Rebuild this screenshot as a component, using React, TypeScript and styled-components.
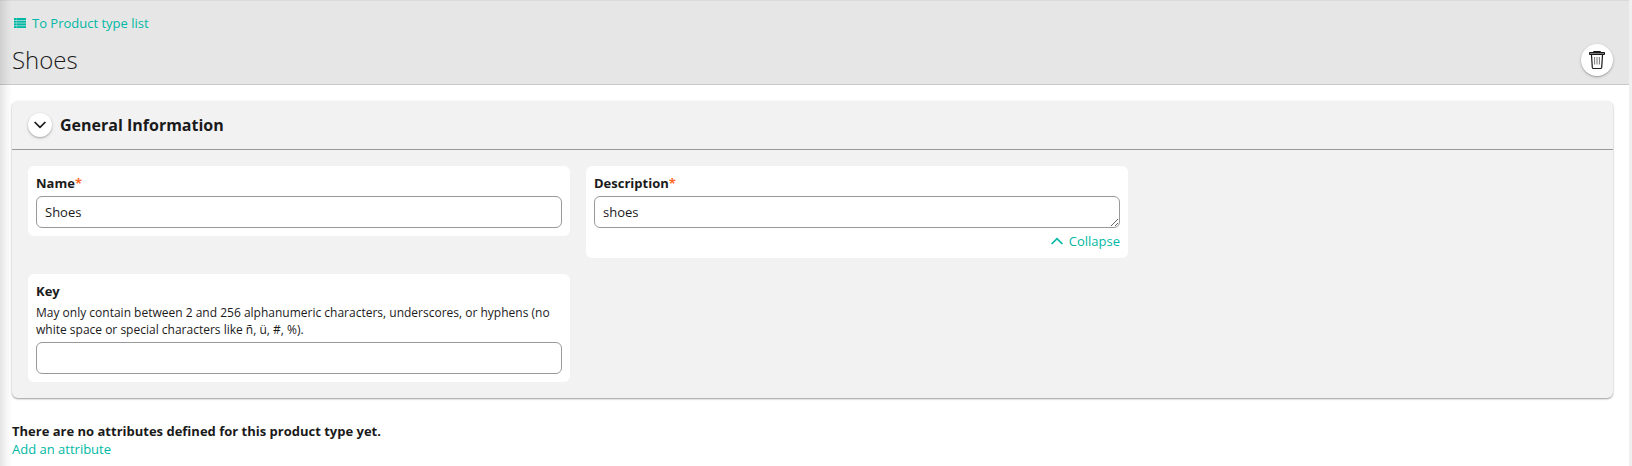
import React from "react";
import styled, { createGlobalStyle } from "styled-components";

const TEAL = "#00b8a4";

const GlobalStyle = createGlobalStyle`
  *, *::before, *::after { box-sizing: border-box; }
  body {
    margin: 0;
    background: #fff;
    color: #1a1a1a;
    font-family: "Open Sans", "Noto Sans", sans-serif;
    font-size: 13px;
    line-height: 18px;
    overflow: hidden;
  }
`;

const Page = styled.div`
  position: relative;
  height: 466px;
  padding-right: 3px;
  background: linear-gradient(#f0f0f0, #f0f0f0) right / 3px 100% no-repeat, #fff;
`;

const EdgeShadow = styled.div`
  position: absolute;
  inset: 0 auto 0 0;
  width: 12px;
  pointer-events: none;
  background: linear-gradient(to right, rgba(0, 0, 0, 0.1), rgba(0, 0, 0, 0.03) 60%, transparent);
`;

const Header = styled.header`
  display: flex;
  justify-content: space-between;
  align-items: flex-end;
  height: 85px;
  padding: 0 16px 8px 12px;
  background: #e6e6e6;
  border-top: 1px solid #dadada;
  border-bottom: 1px solid #c8c8c8;
`;

const Heading = styled.div`
  align-self: flex-start;
  padding-top: 13px;
`;

const LinkButton = styled.a`
  display: flex;
  align-items: center;
  width: fit-content;
  height: 18px;
  color: ${TEAL};
  text-decoration: none;
  cursor: pointer;
`;

const BackLink = styled(LinkButton)`
  gap: 6px;
  padding-left: 2px;
`;

const Title = styled.h1`
  margin: 11px 0 0;
  font-size: 24px;
  line-height: 33px;
  font-weight: 300;
`;

const RoundButton = styled.button<{ $size: number }>`
  display: flex;
  align-items: center;
  justify-content: center;
  width: ${(p) => p.$size}px;
  height: ${(p) => p.$size}px;
  padding: 0;
  border: 0;
  border-radius: 50%;
  background: #fff;
  color: #1a1a1a;
  box-shadow: 0 1px 3px rgba(0, 0, 0, 0.24), 0 1px 1px rgba(0, 0, 0, 0.12);
`;

const Content = styled.main`
  padding: 16px 16px 0 12px;
`;

const Panel = styled.section`
  height: 297px;
  border-radius: 6px;
  background: #f2f2f2;
  box-shadow: 0 1px 2px rgba(0, 0, 0, 0.4);
`;

const PanelHeader = styled.div`
  display: flex;
  align-items: center;
  gap: 8px;
  height: 49px;
  padding: 0 16px;
  border-bottom: 1px solid #999;
`;

const PanelTitle = styled.h2`
  margin: 0;
  font-size: 16px;
  line-height: 22px;
  font-weight: 700;
`;

const Fields = styled.div`
  display: grid;
  grid-template-columns: 542px 542px;
  align-items: start;
  gap: 16px;
  padding: 16px;
`;

const Card = styled.div`
  padding: 8px;
  border-radius: 6px;
  background: #fff;
`;

const Label = styled.label`
  display: block;
  height: 18px;
  margin-bottom: 4px;
  font-weight: 700;
`;

const Required = styled.span`
  color: #ff6a2b;
`;

const Hint = styled.p`
  margin: 0 0 4px;
  font-size: 12px;
  line-height: 17px;
  color: #1a1a1a;
`;

const Input = styled.input`
  display: block;
  width: 100%;
  height: 32px;
  padding: 0 8px;
  border: 1px solid #999;
  border-radius: 6px;
  background: #fff;
  color: #1a1a1a;
  font: inherit;
  outline: none;
`;

const TextArea = styled(Input).attrs({ as: "textarea" })`
  padding: 6px 8px;
  line-height: 18px;
  resize: vertical;
  overflow: hidden;
`;

const CollapseLink = styled(LinkButton)`
  gap: 6px;
  margin: 4px 0 0 auto;
`;

const Empty = styled.div`
  padding-top: 24px;
`;

const Message = styled.strong`
  display: block;
  height: 18px;
`;

const ListIcon = () => (
  <svg width="12" height="10" viewBox="0 0 12 10" fill={TEAL}>
    <path fillOpacity="0.35" d="M0 0h12v10H0z" />
    <path d="M0 0h2v2H0zM2.5 0H12v2H2.5zM0 3h2v1.6H0zM2.5 3H12v1.6H2.5zM0 5.6h2v1.6H0zM2.5 5.6H12v1.6H2.5zM0 8.2h2V10H0zM2.5 8.2H12V10H2.5z" />
  </svg>
);

const TrashIcon = () => (
  <svg width="18" height="20" viewBox="0 0 18 20" fill="none" stroke="#1a1a1a">
    <path d="M5.5 2.5V1.5h7v1" />
    <path d="M1.5 2.5h15v2h-15z" fill="#777" />
    <path d="M3.5 5l.8 12.4q.1 1.1 1.1 1.1h7.2q1 0 1.1-1.1L14.5 5" strokeWidth="1.2" />
    <path d="M6.6 7v7.5M9 7v7.5M11.4 7v7.5" strokeWidth="0.9" stroke="#666" />
  </svg>
);

const Chevron = ({ up = false, color = "#1a1a1a" }: { up?: boolean; color?: string }) => (
  <svg width="12" height="8" viewBox="0 0 12 8" fill="none" stroke={color} strokeWidth="1.7">
    <path d={up ? "M.6 7L6 1.6 11.4 7" : "M.6 1L6 6.4 11.4 1"} />
  </svg>
);

export default function App() {
  return (
    <>
      <GlobalStyle />
      <Page>
        <Header>
          <Heading>
            <BackLink>
              <ListIcon />
              To Product type list
            </BackLink>
            <Title>Shoes</Title>
          </Heading>
          <RoundButton $size={32} aria-label="Delete">
            <TrashIcon />
          </RoundButton>
        </Header>
        <Content>
          <Panel>
            <PanelHeader>
              <RoundButton $size={24} aria-label="Toggle section">
                <Chevron />
              </RoundButton>
              <PanelTitle>General Information</PanelTitle>
            </PanelHeader>
            <Fields>
              <Card>
                <Label htmlFor="name">
                  Name<Required>*</Required>
                </Label>
                <Input id="name" defaultValue="Shoes" />
              </Card>
              <Card>
                <Label htmlFor="description">
                  Description<Required>*</Required>
                </Label>
                <TextArea id="description" defaultValue="shoes" />
                <CollapseLink>
                  <Chevron up color={TEAL} />
                  Collapse
                </CollapseLink>
              </Card>
              <Card>
                <Label htmlFor="key">Key</Label>
                <Hint>
                  May only contain between 2 and 256 alphanumeric characters, underscores, or hyphens (no white space
                  or special characters like ñ, ü, #, %).
                </Hint>
                <Input id="key" />
              </Card>
            </Fields>
          </Panel>
          <Empty>
            <Message>There are no attributes defined for this product type yet.</Message>
            <LinkButton>Add an attribute</LinkButton>
          </Empty>
        </Content>
        <EdgeShadow />
      </Page>
    </>
  );
}
